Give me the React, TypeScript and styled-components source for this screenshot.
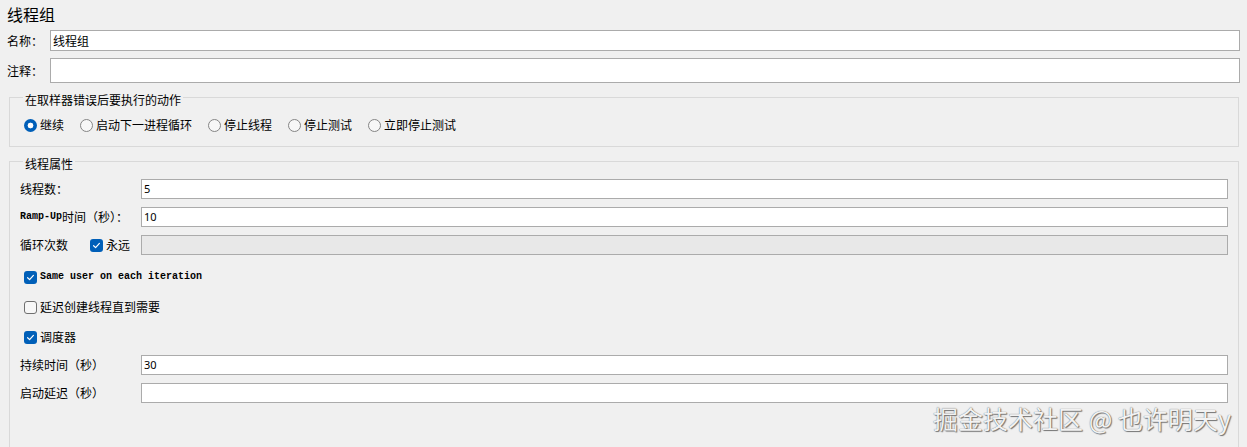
import React, { FC } from 'react';
import styled, { createGlobalStyle } from 'styled-components';

const GlobalStyle = createGlobalStyle`
  html, body {
    margin: 0;
    padding: 0;
    background: #f0f0f0;
  }
  body {
    font-family: "Noto Sans CJK SC", "Noto Sans", sans-serif;
    font-size: 12px;
    color: #000;
  }
`;

const CheckMark: FC = () => (
  <svg width="9" height="9" viewBox="0 0 9 9">
    <path d="M1.6 4.7 L3.6 6.6 L7.4 2.4" fill="none" stroke="#fff" strokeWidth="1.2" strokeLinecap="round" strokeLinejoin="round" />
  </svg>
);

const Check: FC<{ checked?: boolean }> = ({ checked }) => (
  <CheckBox $checked={checked}>{checked && <CheckMark />}</CheckBox>
);

const Radio: FC<{ checked?: boolean; label: string }> = ({ checked, label }) => (
  <RadioItem>
    <RadioDot $checked={checked} />
    <span>{label}</span>
  </RadioItem>
);

const App: FC = () => {
  return (
    <Page>
      <GlobalStyle />
      <Title>线程组</Title>
      <FieldRow $h={21}>
        <Label>名称：</Label>
        <Input $h={21}>线程组</Input>
      </FieldRow>
      <FieldRow $h={25} $top={7}>
        <Label>注释：</Label>
        <Input $h={25} />
      </FieldRow>

      <Group $top={5}>
        <Legend>在取样器错误后要执行的动作</Legend>
        <RadioRow>
          <Radio checked label="继续" />
          <Radio label="启动下一进程循环" />
          <Radio label="停止线程" />
          <Radio label="停止测试" />
          <Radio label="立即停止测试" />
        </RadioRow>
      </Group>

      <Group $top={5} $open>
        <Legend>线程属性</Legend>
        <PropRows $top={9}>
          <PropRow>
            <PropLabel>线程数：</PropLabel>
            <PropInput>5</PropInput>
          </PropRow>
          <PropRow>
            <PropLabel>
              <Mono>Ramp-Up</Mono>时间（秒）：
            </PropLabel>
            <PropInput>10</PropInput>
          </PropRow>
          <PropRow>
            <PropLabel>
              <span>循环次数</span>
              <Forever>
                <Check checked />
                <span>永远</span>
              </Forever>
            </PropLabel>
            <PropInput $disabled />
          </PropRow>
        </PropRows>

        <CheckRows>
          <CheckRow>
            <Check checked />
            <Mono>Same user on each iteration</Mono>
          </CheckRow>
          <CheckRow>
            <Check />
            <span>延迟创建线程直到需要</span>
          </CheckRow>
          <CheckRow>
            <Check checked />
            <span>调度器</span>
          </CheckRow>
        </CheckRows>

        <PropRows $top={3}>
          <PropRow>
            <PropLabel>持续时间（秒）</PropLabel>
            <PropInput>30</PropInput>
          </PropRow>
          <PropRow>
            <PropLabel>启动延迟（秒）</PropLabel>
            <PropInput />
          </PropRow>
        </PropRows>
      </Group>

      <Watermark>掘金技术社区 @ 也许明天y</Watermark>
    </Page>
  );
};
export default App;

const Page = styled.div`
  position: relative;
  width: 1247px;
  height: 447px;
  overflow: hidden;
  box-sizing: border-box;
  padding: 0 7px;
`;

const Title = styled.div`
  font-size: 16px;
  line-height: 20px;
  height: 30px;
  padding-top: 4px;
  box-sizing: border-box;
`;

const FieldRow = styled.div<{ $h: number; $top?: number }>`
  display: flex;
  align-items: center;
  height: ${p => p.$h}px;
  margin-top: ${p => p.$top || 0}px;
`;

const Label = styled.div`
  width: 43px;
  flex: none;
  line-height: 16px;
`;

const Input = styled.div<{ $h: number }>`
  flex: 1;
  height: ${p => p.$h}px;
  box-sizing: border-box;
  background: #fff;
  border: 1px solid #ababab;
  padding: 0 2px;
  line-height: ${p => p.$h - 2}px;
  font-size: 12px;
`;

const Group = styled.fieldset<{ $top: number; $open?: boolean }>`
  margin: ${p => p.$top}px 1px 0 2px;
  padding: 0 10px ${p => (p.$open ? 60 : 13)}px 10px;
  border: 1px solid #d9d9d9;
  min-inline-size: 0;
`;

const Legend = styled.legend`
  padding: 6px 2px 0 2px;
  margin-left: 3px;
  line-height: 12px;
  font-size: 12px;
`;

const RadioRow = styled.div`
  display: flex;
  align-items: center;
  gap: 16px;
  height: 16px;
  padding-top: 11px;
  padding-left: 4px;
`;

const RadioItem = styled.div`
  display: flex;
  align-items: center;
  gap: 3px;
  line-height: 16px;
`;

const RadioDot = styled.span<{ $checked?: boolean }>`
  width: 13px;
  height: 13px;
  box-sizing: border-box;
  border-radius: 50%;
  flex: none;
  ${p =>
    p.$checked
      ? `background: radial-gradient(circle, #fff 0 2.6px, #005fb8 3.2px);`
      : `border: 1px solid #858585; background: #f7f7f7;`}
`;

const PropRows = styled.div<{ $top: number }>`
  display: flex;
  flex-direction: column;
  gap: 8px;
  margin-top: ${p => p.$top}px;
`;

const PropRow = styled.div`
  display: flex;
  align-items: center;
  height: 20px;
`;

const PropLabel = styled.div`
  width: 121px;
  flex: none;
  display: flex;
  align-items: center;
  line-height: 16px;
  white-space: nowrap;
`;

const Mono = styled.span`
  font-family: "Liberation Mono", "DejaVu Sans Mono", monospace;
  font-size: 10px;
  font-weight: bold;
`;

const PropInput = styled.div<{ $disabled?: boolean }>`
  flex: 1;
  height: 20px;
  box-sizing: border-box;
  background: ${p => (p.$disabled ? '#e8e8e8' : '#fff')};
  border: 1px solid #ababab;
  padding: 0 2px;
  line-height: 18px;
  font-family: "Noto Sans", sans-serif;
  font-size: 11px;
`;

const Forever = styled.div`
  display: flex;
  align-items: center;
  gap: 3px;
  margin-left: 22px;
`;

const CheckBox = styled.span<{ $checked?: boolean }>`
  width: 13px;
  height: 13px;
  box-sizing: border-box;
  border-radius: 3px;
  flex: none;
  display: flex;
  align-items: center;
  justify-content: center;
  ${p =>
    p.$checked
      ? `background: #005fb8;`
      : `border: 1px solid #6f6f6f; background: #f7f7f7;`}
`;

const CheckRows = styled.div`
  display: flex;
  flex-direction: column;
  margin-top: 7px;
`;

const CheckRow = styled.div`
  display: flex;
  align-items: center;
  gap: 3px;
  height: 30px;
  padding-left: 4px;
  line-height: 16px;
`;

const Watermark = styled.div`
  position: absolute;
  right: 16px;
  bottom: 14px;
  font-size: 25px;
  line-height: 30px;
  color: #f2f2f2;
  text-shadow: 0 0 1px #555, 1px 1px 1px #777;
  white-space: nowrap;
`;
